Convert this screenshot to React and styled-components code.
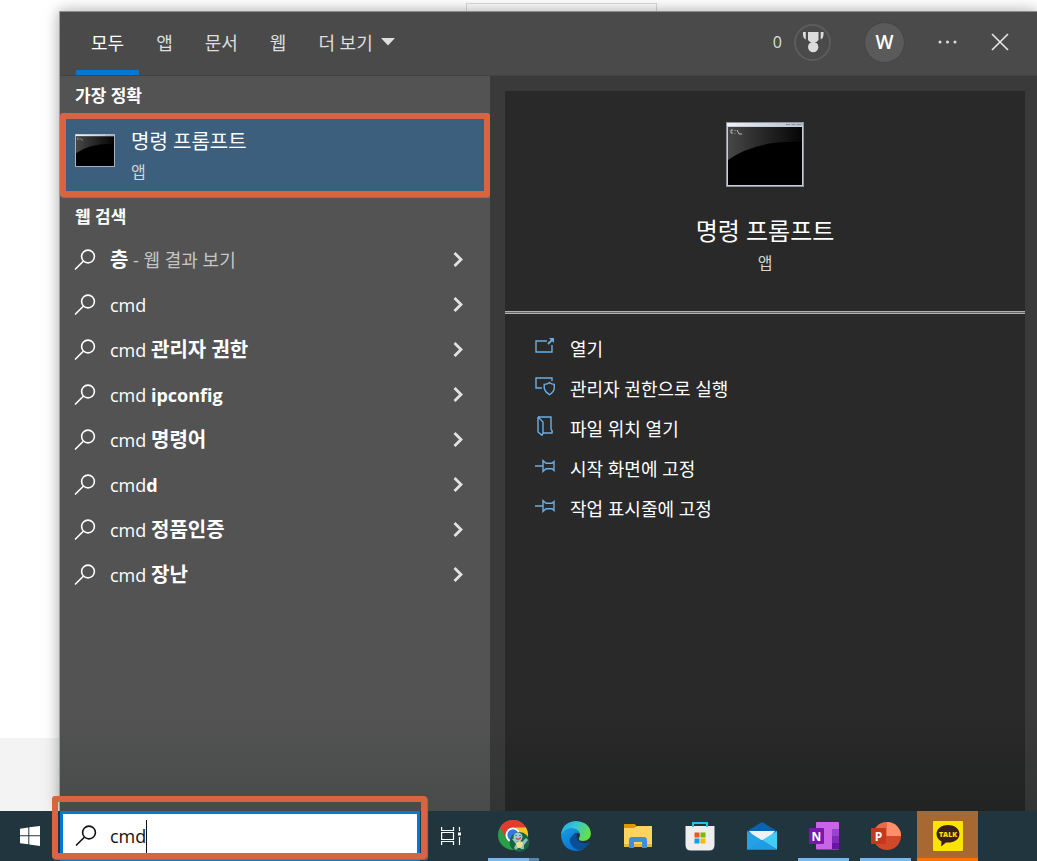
import { useState } from "react";
import styled, { createGlobalStyle } from "styled-components";

const tabs = ["모두", "앱", "문서", "웹"];

const webResults = [
    { id: 1, typed: "", rest: "층", note: " - 웹 결과 보기", hangul: true },
    { id: 2, typed: "cmd", rest: "" },
    { id: 3, typed: "cmd ", rest: "관리자 권한", hangul: true },
    { id: 4, typed: "cmd ", rest: "ipconfig" },
    { id: 5, typed: "cmd ", rest: "명령어", hangul: true },
    { id: 6, typed: "cmd", rest: "d" },
    { id: 7, typed: "cmd ", rest: "정품인증", hangul: true },
    { id: 8, typed: "cmd ", rest: "장난", hangul: true },
];

const SearchIcon = () => (
    <svg width="22" height="22" viewBox="0 0 22 22" fill="none" stroke="currentColor" strokeWidth="1.6">
        <circle cx="14" cy="7.5" r="6.4" />
        <path d="M9.3 12.2 L1 20.500" />
    </svg>
);

const ChevronIcon = () => (
    <svg width="12" height="16" viewBox="0 0 12 16" fill="none" stroke="#e2e2e2" strokeWidth="2.8">
        <path d="M1.500 1 L8 7.500 L1.500 14" />
    </svg>
);

const ConsoleIcon = ({ width, height, id }) => (
    <svg width={width} height={height} viewBox="0 0 78 65" preserveAspectRatio="none">
        <defs>
            <linearGradient id={`${id}shine`} x1="0" y1="0" x2="1" y2="0">
                <stop offset="0" stopColor="#474747" />
                <stop offset="1" stopColor="#050505" />
            </linearGradient>
            <linearGradient id={`${id}bar`} x1="0" y1="0" x2="1" y2="0">
                <stop offset="0" stopColor="#eef3f8" />
                <stop offset="1" stopColor="#b4bfca" />
            </linearGradient>
        </defs>
        <rect width="78" height="65" fill="#8e93a3" />
        <rect x="1" y="1" width="76" height="63" fill="#c9cddb" />
        <rect x="1" y="1" width="76" height="3" fill={`url(#${id}bar)`} />
        <path d="M60 2.5h15" stroke="#8995a3" strokeDasharray="4 1.5" />
        <rect x="2" y="5" width="74" height="58" fill="#000" />
        <path d="M2 5H76V20Q30 18 2 38Z" fill={`url(#${id}shine)`} />
        <path d="M7 8H5V11H7M9 8v1M9 11v.6M11 8l2 4M13 12h3" stroke="#c8c8c8" fill="none" strokeWidth=".9" />
    </svg>
);

const OpenIcon = () => (
    <svg width="20" height="20" viewBox="0 0 20 20" fill="none" stroke="currentColor" strokeWidth="1.4">
        <path d="M12 5H1V16H17V9" />
        <path d="M13 8L17.5 3.5" strokeWidth="1.800" />
        <path d="M14 2H19V7Z" fill="currentColor" stroke="none" />
    </svg>
);

const AdminIcon = () => (
    <svg width="20" height="20" viewBox="0 0 20 20" fill="none" stroke="currentColor" strokeWidth="1.4">
        <path d="M17 5V2H1V12H7" />
        <path d="M14.5 6.5Q16.5 8.4 19.3 8.4V12Q19 16 14.5 18.6Q10 16 9.2 12V8.4Q12.500 8.400 14.5 6.5Z" />
    </svg>
);

const FolderIcon = () => (
    <svg width="20" height="20" viewBox="0 0 20 20" fill="none" stroke="currentColor" strokeWidth="1.4">
        <path d="M3 1H16V13Q17.500 14.500 17 17H8" />
        <path d="M3 1V16L7 19.300L8 17V6L3 1" />
    </svg>
);

const PinIcon = () => (
    <svg width="20" height="20" viewBox="0 0 20 20" fill="none" stroke="currentColor" strokeWidth="1.4">
        <path d="M0 10H8M8 4.500V15.500L11 12.700H17L19 14.500V5.500L17 7.300H11Z" />
    </svg>
);

const actions = [
    { id: "open", label: "열기", Icon: OpenIcon },
    { id: "admin", label: "관리자 권한으로 실행", Icon: AdminIcon },
    { id: "location", label: "파일 위치 열기", Icon: FolderIcon },
    { id: "start", label: "시작 화면에 고정", Icon: PinIcon },
    { id: "taskbar", label: "작업 표시줄에 고정", Icon: PinIcon },
];

const MedalIcon = () => (
    <svg width="22" height="22" viewBox="0 0 22 22" fill="#dcdcdc">
        <path d="M6 1H16.500V9L14.500 11H8L6 9Z" />
        <path d="M1 1H3.800V8.500Q1 7 1 4ZM21.500 1H18.700V8.500Q21.500 7 21.500 4Z" />
        <circle cx="11.200" cy="16" r="5.200" />
    </svg>
);

const WindowsIcon = () => (
    <svg width="20" height="20" viewBox="0 0 20 20" fill="#fff">
        <path d="M0 2.800L8.300 1.500V9.300H0ZM9.300 1.300L20 0V9.300H9.300ZM0 10.300H8.300V18.300L0 17.200ZM9.300 10.300H20V20L9.300 18.500Z" />
    </svg>
);

const TaskViewIcon = () => (
    <svg width="21" height="20" viewBox="0 0 21 20" fill="none" stroke="#fff" strokeWidth="1.200">
        <path d="M.6 1V4.500H12.500V1M.6 19V15.500H12.500V19M.6 6.500H12.500V13.500H.6ZM18.500 1V5M18.500 11V19" />
        <rect x="17" y="6.500" width="3" height="3" fill="#fff" stroke="none" />
    </svg>
);

const ChromeIcon = () => (
    <svg width="32" height="32" viewBox="0 0 32 32">
        <circle cx="15" cy="15" r="15" fill="#2a9d49" />
        <path d="M2 7.500A15 15 0 0 1 28 7.500H15A7.500 7.500 0 0 0 8.500 18.800Z" fill="#e33b2e" />
        <path d="M28 7.500A15 15 0 0 1 15 30L21.500 18.800A7.500 7.500 0 0 0 15 7.500Z" fill="#fcc521" />
        <circle cx="15" cy="15" r="7.500" fill="#fff" />
        <circle cx="15" cy="15" r="5.700" fill="#3478e5" />
        <circle cx="21.500" cy="22" r="10" fill="#17643f" />
        <path d="M14 19L17 18L19 22H24L28 18L30 20L26 25V29H23L21 27L18 30L16 28L18 24Z" fill="#92bfc6" />
        <circle cx="20" cy="17" r="4.500" fill="#9fcbd0" />
        <path d="M18 23Q22 19 25 23L24 27Q21 29 19 27Z" fill="#ecdf91" />
        <path d="M18 18Q20 20.500 23 17.500" stroke="#c04c4c" strokeWidth="1.500" fill="none" />
        <path d="M18 15v1M22 15v1" stroke="#384650" />
    </svg>
);

const EdgeIcon = () => (
    <svg width="32" height="32" viewBox="0 0 32 32">
        <defs>
            <linearGradient id="edgeTop" x1="0" y1="0" x2="1" y2=".4">
                <stop offset="0" stopColor="#25a7df" />
                <stop offset=".5" stopColor="#35c6d6" />
                <stop offset="1" stopColor="#64df4a" />
            </linearGradient>
            <linearGradient id="edgeLeft" x1="0" y1="0" x2=".6" y2="1">
                <stop offset="0" stopColor="#199be0" />
                <stop offset="1" stopColor="#0873d1" />
            </linearGradient>
        </defs>
        <path d="M1 15Q2 2 16 1Q30 2 31 14Q30 21 23 21Q18 21 19 18Q22 14 17 10Q9 7 1 15Z" fill="url(#edgeTop)" />
        <path d="M1 16Q4 8 12 8Q19 9 20 15Q18 11 14 14Q9 20 15 26Q19 29 24 29Q20 31 16 31Q3 30 1 16Z" fill="url(#edgeLeft)" />
        <path d="M13 15Q7 20 12 26Q19 33 25 28Q29 25 30 22Q25 25 20 22Q15 19 17 13Z" fill="#0b4e98" />
    </svg>
);

const ExplorerIcon = () => (
    <svg width="30" height="26" viewBox="0 0 30 26">
        <path d="M1 1H12L14 4V8H1Z" fill="#dc9800" />
        <path d="M1 5H11L14 3H29V24H1Z" fill="#ffd45e" />
        <path d="M1 21H29V24H1Z" fill="#e9b53d" />
        <path d="M6 25V17Q6 14 9 14H21Q24 14 24 17V25H19V19H11V25Z" fill="#3c91da" />
    </svg>
);

const StoreIcon = () => (
    <svg width="30" height="30" viewBox="0 0 30 30">
        <path d="M.5 5H29.500V24Q29.500 29.500 24 29.500H6Q.5 29.500 .5 24Z" fill="#eeeeef" />
        <path d="M8 6V2H22V6" fill="none" stroke="#26c1ea" strokeWidth="2" />
        <path d="M9.500 11.500H14.500V16.500H9.500Z" fill="#ee5226" />
        <path d="M15.500 11.500H20.500V16.500H15.500Z" fill="#7bb807" />
        <path d="M9.500 17.500H14.500V22.500H9.500Z" fill="#08a3ee" />
        <path d="M15.500 17.500H20.500V22.500H15.500Z" fill="#fdb707" />
    </svg>
);

const MailIcon = () => (
    <svg width="30" height="28" viewBox="0 0 30 28">
        <path d="M0 9L15 0L30 9V15H0Z" fill="#0864b3" />
        <path d="M2 9H28L20 18H10Z" fill="#f0f1f3" />
        <path d="M0 9L30 27.500H0Z" fill="#25a2e7" />
        <path d="M30 9V27.500L15 18.300Z" fill="#42cdf5" />
        <path d="M0 27.500L15 18.300L30 27.500Z" fill="#209ce2" />
    </svg>
);

const OneNoteIcon = () => (
    <svg width="30" height="28" viewBox="0 0 30 28">
        <rect x="7" width="23" height="27.500" rx="1" fill="#c964e8" />
        <path d="M23 7H30V14H23Z" fill="#9a41cf" />
        <path d="M23 14H30V21H23Z" fill="#8229be" />
        <path d="M23 21H30V27H23Z" fill="#6c12a8" />
        <rect y="6" width="15" height="16" rx="1" fill="#7719a9" />
        <text x="7.500" y="18.500" textAnchor="middle" fill="#fff" fontFamily="Open Sans, sans-serif" fontWeight="700" fontSize="12">N</text>
    </svg>
);

const PowerPointIcon = () => (
    <svg width="30" height="28" viewBox="0 0 30 28">
        <circle cx="16" cy="14" r="14" fill="#d2492a" />
        <path d="M16 0A14 14 0 0 0 2 14H16Z" fill="#e9694a" />
        <path d="M16 0A14 14 0 0 1 30 14H16Z" fill="#ff8f6b" />
        <rect y="6" width="15" height="16" rx="1" fill="#c2391c" />
        <text x="7.500" y="18.500" textAnchor="middle" fill="#fff" fontFamily="Open Sans, sans-serif" fontWeight="700" fontSize="12">P</text>
    </svg>
);

const TalkIcon = () => (
    <svg width="30" height="30" viewBox="0 0 30 30">
        <rect width="30" height="30" rx="1" fill="#fbe300" />
        <path d="M15 4C8 4 3.500 8 3.500 13Q3.500 18 8.500 20.500L8 25.500L13 21.500C21 22 26.500 18.500 26.500 13C26.500 8 22 4 15 4Z" fill="#3a1e1c" />
        <text x="15" y="16" textAnchor="middle" fill="#fbe300" fontFamily="Open Sans, sans-serif" fontWeight="800" fontSize="7">TALK</text>
    </svg>
);

const apps = [
    { name: "Chrome", Icon: ChromeIcon, running: true, stacked: true },
    { name: "Edge", Icon: EdgeIcon },
    { name: "파일 탐색기", Icon: ExplorerIcon },
    { name: "Microsoft Store", Icon: StoreIcon },
    { name: "메일", Icon: MailIcon },
    { name: "OneNote", Icon: OneNoteIcon, running: true },
    { name: "PowerPoint", Icon: PowerPointIcon, running: true },
    { name: "KakaoTalk", Icon: TalkIcon, alert: true },
];

const App = () => {
    const [query, setQuery] = useState("cmd");
    const [activeTab, setActiveTab] = useState("모두");

    return (
        <Page>
            <GlobalStyle />
            <Desktop>
                <SearchWindow>
                    <Header>
                        <Tabs>
                            {tabs.map((tab) => (
                                <Tab key={tab} $active={tab === activeTab} onClick={() => setActiveTab(tab)}>
                                    {tab}
                                </Tab>
                            ))}
                            <Tab>
                                더 보기
                                <svg width="14" height="8" viewBox="0 0 14 8" fill="#dedede"><path d="M0 0H14L7 7.500Z" /></svg>
                            </Tab>
                        </Tabs>
                        <Tools>
                            <Points>
                                0
                                <Medal><MedalIcon /></Medal>
                            </Points>
                            <Avatar>W</Avatar>
                            <IconButton aria-label="옵션">
                                <svg width="20" height="18" viewBox="0 0 20 18" fill="#dedede">
                                    <circle cx="2" cy="9" r="1.500" /><circle cx="9.500" cy="9" r="1.500" /><circle cx="17" cy="9" r="1.500" />
                                </svg>
                            </IconButton>
                            <IconButton aria-label="닫기">
                                <svg width="18" height="18" viewBox="0 0 18 18" stroke="#e4e4e4" strokeWidth="1.700">
                                    <path d="M1 1L17 17M17 1L1 17" />
                                </svg>
                            </IconButton>
                        </Tools>
                    </Header>
                    <Body>
                        <Results>
                            <Heading>가장 정확</Heading>
                            <BestMatch>
                                <ConsoleIcon width={40} height={33} id="small" />
                                <BestText>
                                    <BestName>명령 프롬프트</BestName>
                                    <Kind>앱</Kind>
                                </BestText>
                            </BestMatch>
                            <Heading>웹 검색</Heading>
                            {webResults.map((item) => (
                                <ResultRow key={item.id}>
                                    <SearchIcon />
                                    <ResultText>
                                        {item.typed}
                                        <Suggested $hangul={item.hangul}>{item.rest}</Suggested>
                                        {item.note && <Note>{item.note}</Note>}
                                    </ResultText>
                                    <ChevronIcon />
                                </ResultRow>
                            ))}
                        </Results>
                        <PreviewArea>
                            <Preview>
                                <Summary>
                                    <ConsoleIcon width={78} height={65} id="large" />
                                    <AppName>명령 프롬프트</AppName>
                                    <Kind>앱</Kind>
                                </Summary>
                                <Actions>
                                    {actions.map(({ id, label, Icon }) => (
                                        <Action key={id}>
                                            <Icon />
                                            <span>{label}</span>
                                        </Action>
                                    ))}
                                </Actions>
                            </Preview>
                        </PreviewArea>
                    </Body>
                </SearchWindow>
            </Desktop>
            <Taskbar>
                <StartButton aria-label="시작"><WindowsIcon /></StartButton>
                <SearchBox>
                    <SearchIcon />
                    <SearchInput aria-label="검색" value={query} onChange={(e) => setQuery(e.target.value)} />
                    <Caret />
                </SearchBox>
                <TaskButtons>
                    <TaskButton aria-label="작업 보기"><TaskViewIcon /></TaskButton>
                    {apps.map(({ name, Icon, running, stacked, alert }) => (
                        <TaskButton key={name} aria-label={name} $running={running} $stacked={stacked} $alert={alert}>
                            <Icon />
                        </TaskButton>
                    ))}
                </TaskButtons>
            </Taskbar>
        </Page>
    );
};

const GlobalStyle = createGlobalStyle`
* {
    box-sizing: border-box;
}
body {
    margin: 0;
    background: #fff;
    font-family: "Open Sans", "Noto Sans CJK KR", sans-serif;
    font-size: 18px;
}
button, input {
    font: inherit;
    color: inherit;
    border: 0;
    padding: 0;
    background: none;
}
svg {
    display: block;
    flex-shrink: 0;
}
`;

const Page = styled.div`
    min-height: 100vh;
    display: flex;
    flex-direction: column;
`;

const Desktop = styled.div`
    flex: 1;
    display: flex;
    position: relative;
    overflow: hidden;
    padding: 11px 0 0 59px;
    background: linear-gradient(to top, #f3f3f3 73px, #fff 73px);
    &::before {
        content: "";
        position: absolute;
        top: 3px;
        left: 466px;
        width: 191px;
        height: 12px;
        box-sizing: border-box;
        border: 1px solid #dcdcdc;
    }
`;

const SearchWindow = styled.main`
    flex: 1;
    position: relative;
    display: flex;
    flex-direction: column;
    border-left: 1px solid #9b9e9e;
    box-shadow: 0 0 14px rgba(0, 0, 0, 0.35);
    color: #fff;
`;

const Header = styled.header`
    height: 65px;
    display: flex;
    justify-content: space-between;
    padding: 0 28px 0 16px;
    background: #4a4a4a;
    border-top: 1px solid #8b8e8e;
    border-bottom: 1px solid #434343;
`;

const Tabs = styled.nav`
    display: flex;
    gap: 2px;
`;

const Tab = styled.button`
    display: flex;
    align-items: center;
    gap: 8px;
    padding: 1px 15px 0;
    border-bottom: 5px solid ${(props) => (props.$active ? "#0078d7" : "transparent")};
    color: ${(props) => (props.$active ? "#fff" : "#dedede")};
`;

const Tools = styled.div`
    display: flex;
    align-items: center;
    gap: 33px;
    padding-bottom: 3px;
`;

const Points = styled.div`
    display: flex;
    align-items: center;
    gap: 12px;
    font-size: 16px;
    color: #dedede;
`;

const Medal = styled.span`
    width: 37px;
    height: 37px;
    display: flex;
    align-items: center;
    justify-content: center;
    border: 2px solid #5c5c5c;
    border-radius: 50%;
`;

const Avatar = styled.button`
    width: 41px;
    height: 41px;
    border-radius: 50%;
    background: #5a5a5a;
    border: 1px solid #444;
    font-size: 19px;
    font-weight: 600;
`;

const IconButton = styled.button`
    display: flex;
`;

const Body = styled.div`
    flex: 1;
    display: grid;
    grid-template-columns: 430px 1fr;
`;

const Results = styled.section`
    background: linear-gradient(to top, #494b4b, #535353 100px);
`;

const Heading = styled.h2`
    margin: 0;
    padding: 0 15px;
    font-size: 17px;
    font-weight: 700;
    line-height: 40px;
    &:first-child {
        padding-top: 2px;
        line-height: 35px;
    }
`;

const BestMatch = styled.button`
    width: 100%;
    height: 84px;
    display: flex;
    padding: 15px 9px 0;
    gap: 16px;
    align-items: flex-start;
    text-align: left;
    background: #3d5f7e;
    border: 6px solid #d86443;
    border-radius: 3px;
    box-shadow: 1px 1px 1px #777;
`;

const BestText = styled.span`
    display: flex;
    flex-direction: column;
    margin-top: -8px;
`;

const BestName = styled.span`
    font-size: 20px;
    line-height: 32px;
`;

const Kind = styled.span`
    font-size: 16px;
    line-height: 28px;
    color: #d5d5d5;
`;

const ResultRow = styled.button`
    width: 100%;
    height: 45px;
    display: flex;
    align-items: center;
    gap: 14px;
    padding: 0 25px 0 14px;
    text-align: left;
`;

const ResultText = styled.span`
    flex: 1;
    font-size: 18px;
    line-height: 28px;
    white-space: pre;
`;

const Suggested = styled.b`
    font-size: ${(props) => (props.$hangul ? "20px" : "18px")};
    line-height: 1;
`;

const Note = styled.span`
    color: #c6c6c6;
`;

const PreviewArea = styled.section`
    display: flex;
    padding: 15px 12px 0 15px;
    background: linear-gradient(to top, #333434, #3a3a3a 100px);
`;

const Preview = styled.div`
    flex: 1;
    background: linear-gradient(to top, #222323, #292929 100px);
`;

const Summary = styled.div`
    height: 223px;
    display: flex;
    flex-direction: column;
    align-items: center;
    padding-top: 31px;
    border-bottom: 3px double #b0b0b0;
    background: linear-gradient(#666, #666) bottom / 100% 3px no-repeat border-box;
`;

const AppName = styled.h1`
    margin: 26px 0 0;
    font-size: 24px;
    font-weight: 400;
    line-height: 36px;
`;

const Actions = styled.div`
    padding: 14px 30px;
`;

const Action = styled.button`
    width: 100%;
    height: 40px;
    display: flex;
    align-items: center;
    gap: 15px;
    color: #fff;
    text-align: left;
    svg {
        margin-bottom: 4px;
        color: #69aee6;
    }
`;

const Taskbar = styled.footer`
    height: 50px;
    display: flex;
    background: #21353f;
`;

const StartButton = styled.button`
    width: 60px;
    display: flex;
    align-items: center;
    justify-content: center;
`;

const SearchBox = styled.label`
    width: 360px;
    position: relative;
    display: flex;
    align-items: center;
    padding: 0 12px;
    background: #fff;
    border: 3px solid #0078d7;
    color: #111;
    /* marker frame around the whole search box */
    &::after {
        content: "";
        position: absolute;
        inset: -18px -10px -1px -11px;
        border: 6px solid #d86443;
        border-radius: 3px;
        box-shadow: 1px 1px 1px #777;
    }
`;

const SearchInput = styled.input`
    field-sizing: content;
    margin-left: 13px;
    outline: none;
`;

const Caret = styled.span`
    width: 1px;
    height: 33px;
    background: #111;
`;

const TaskButtons = styled.div`
    display: flex;
    gap: 1px;
    margin-left: 1px;
`;

const TaskButton = styled.button`
    width: 61px;
    position: relative;
    display: flex;
    align-items: center;
    justify-content: center;
    background: ${(props) => (props.$alert ? "#a76832" : "transparent")};
    &::after {
        content: "";
        position: absolute;
        bottom: 0;
        left: ${(props) => (props.$alert ? "0" : "5px")};
        right: ${(props) => (props.$alert ? "0" : "5px")};
        height: 3px;
        background: ${(props) => {
            if (props.$alert) return "#ff7300";
            if (props.$stacked) return "linear-gradient(to right, #76b9ed 80%, #5787ac 80%)";
            return props.$running ? "#76b9ed" : "transparent";
        }};
    }
`;

export default App;
